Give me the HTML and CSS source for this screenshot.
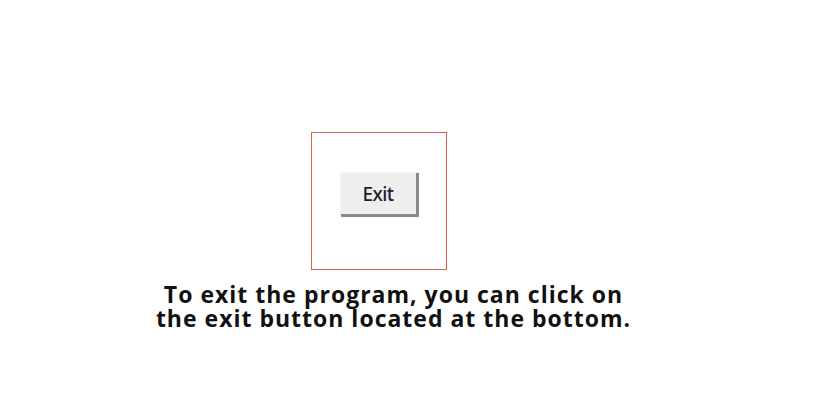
FILE: index.html
```html
<!DOCTYPE html>
<html>
<head>
<meta charset="utf-8">
<link rel="stylesheet" href="styles.css">
</head>
<body>
<main class="page">
  <div class="frame">
    <button class="exit-btn" type="button">Exit</button>
  </div>
  <p class="caption">To exit the program, you can click on<br>the exit button located at the bottom.</p>
</main>
</body>
</html>
```

FILE: styles.css
```css
html, body {
  margin: 0;
  padding: 0;
  background: #ffffff;
}

.page {
  width: 826px;
  height: 407px;
  padding-top: 132px;
  box-sizing: border-box;
}

.frame {
  margin-left: 311px;
  width: 134px;
  height: 97px;
  border: 1px solid #e0604e;
  display: flex;
  justify-content: center;
  align-items: flex-start;
  padding-top: 39px;
  box-sizing: content-box;
}

.exit-btn {
  width: 79px;
  height: 45px;
  margin: 0;
  padding: 0 3px 3px 0;
  background: #eeeeee;
  border: none;
  border-top: 1px solid #f6f6f6;
  border-left: 1px solid #f6f6f6;
  box-shadow: inset -3px -3px 0 #8a8a8a;
  font-family: "Noto Sans", "DejaVu Sans", sans-serif;
  font-size: 19px;
  font-weight: 500;
  letter-spacing: -0.6px;
  color: #1e1e2c;
  cursor: default;
}

.caption {
  margin: 12px 0 0 0;
  width: 787px;
  text-align: center;
  font-family: "Open Sans", "Liberation Sans", sans-serif;
  font-weight: 700;
  font-size: 23px;
  letter-spacing: 1px;
  line-height: 24px;
  color: #111111;
}
```
